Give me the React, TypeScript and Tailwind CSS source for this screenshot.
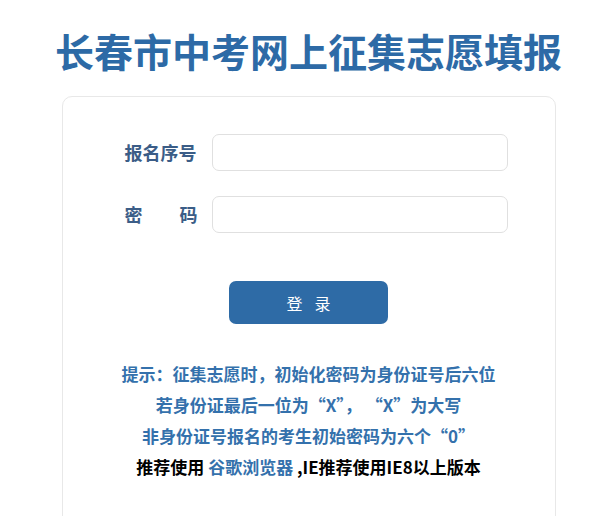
import { useState } from 'react';

const font = { fontFamily: '"Noto Sans CJK SC", "Noto Sans", sans-serif' };

const LoginForm = () => {
  const [regNo, setRegNo] = useState('');
  const [password, setPassword] = useState('');

  return (
    <div className="h-[516px] overflow-hidden bg-white pl-[17px]" style={font}>
      <h1 className="pt-[26px] text-center text-[39px] font-bold leading-[49px] text-[#2d6aa6]">
        长春市中考网上征集志愿填报
      </h1>

      <div className="mx-auto mt-[21px] w-[494px] h-[460px] rounded-[10px] border border-[#e8e8e8] bg-white pt-[37px]">
        <div className="flex flex-col gap-[25px] pl-[62px]">
          <div className="flex items-center">
            <label className="w-[73px] text-[18px] font-bold text-[#3b5d87]">报名序号</label>
            <input
              value={regNo}
              onChange={(e) => setRegNo(e.target.value)}
              className="ml-[14px] h-[37px] w-[296px] rounded-[7px] border border-[#e0e0e0] px-3 outline-none"
            />
          </div>
          <div className="flex items-center">
            <label className="flex w-[73px] justify-between text-[18px] font-bold text-[#3b5d87]">
              <span>密</span>
              <span>码</span>
            </label>
            <input
              type="password"
              value={password}
              onChange={(e) => setPassword(e.target.value)}
              className="ml-[14px] h-[37px] w-[296px] rounded-[7px] border border-[#e0e0e0] px-3 outline-none"
            />
          </div>
        </div>

        <div className="mt-[48px] flex justify-center">
          <button className="h-[43px] w-[159px] rounded-[7px] bg-[#2e6ba6] pl-[12px] text-[16px] tracking-[12px] text-white">
            登录
          </button>
        </div>

        <div className="mt-[34px] text-center text-[17px] font-bold leading-[31px] text-[#3471ac]">
          <p>提示：征集志愿时，初始化密码为身份证号后六位</p>
          <p>若身份证最后一位为“X”， “X”为大写</p>
          <p>非身份证号报名的考生初始密码为六个“0”</p>
          <p className="text-black">
            推荐使用 <span className="text-[#3471ac]">谷歌浏览器</span> ,IE推荐使用IE8以上版本
          </p>
        </div>
      </div>
    </div>
  );
};

export default function App() {
  return <LoginForm />;
}
